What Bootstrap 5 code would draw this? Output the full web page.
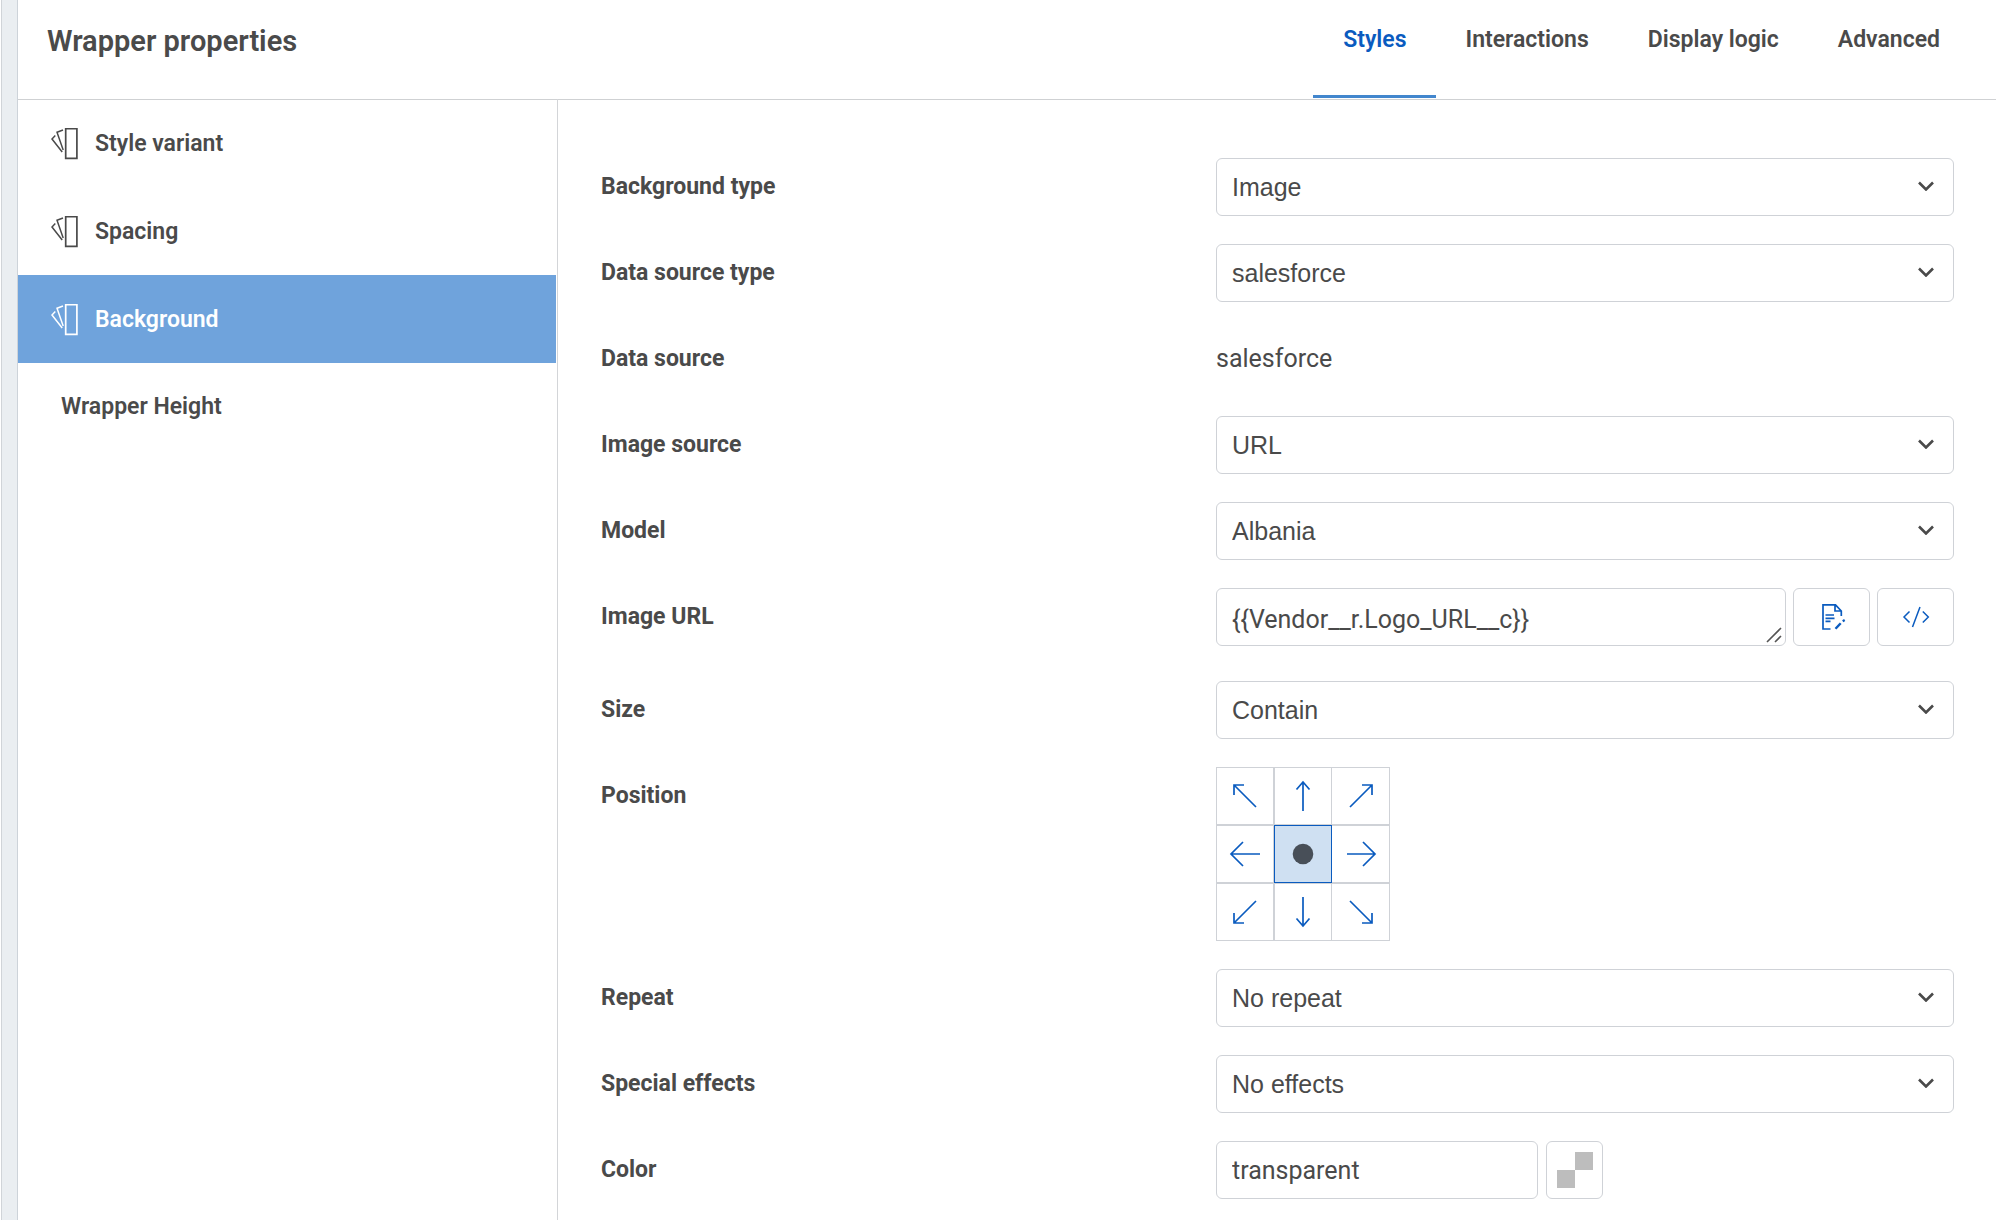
<!DOCTYPE html>
<html lang="en">
<head>
<meta charset="utf-8">
<meta name="viewport" content="width=device-width, initial-scale=1">
<title>Wrapper properties</title>
<link href="https://cdn.jsdelivr.net/npm/bootstrap@5.3.0/dist/css/bootstrap.min.css" rel="stylesheet">
<style>
:root { --ink: #4a4a4a; --blue: #0a5bbf; --line: #cfd2d7; }
body { font-family: Roboto, "Liberation Sans", sans-serif; color: var(--ink); background: #fff; }
.edge-rail { flex: 0 0 17px; margin-left: 1px; background: #eaeef1; border-left: 1px solid #d0d4d8; border-right: 1px solid #cdd3d9; }
.panel-head { height: 100px; padding: 0 27px 0 29px; border-bottom: 1px solid #cfd1d3; }
.panel-title { font-size: 29px; line-height: 32px; font-weight: 600; padding-top: 25px; }
.tab-link { display: block; height: 98px; padding: 26px 29px 0 30px; font-size: 23px; line-height: 28px; font-weight: 600; color: var(--ink); text-decoration: none; }
.tab-link.active { color: var(--blue); border-bottom: 3px solid #4286cd; }
.side-nav { flex: 0 0 540px; margin-top: -1px; padding-right: 1px; border-right: 1px solid #d3d5d8; }
.side-link { height: 88px; padding: 2px 32px 0; gap: 17px; font-size: 23px; line-height: 28px; font-weight: 600; color: var(--ink); text-decoration: none; }
.side-link.active { background: #6fa3dc; color: #fff; }
.side-link.plain { padding: 0 43px; }
.fields { padding: 58px 42px 20px 43px; display: flex; flex-direction: column; gap: 28px; }
.field-row { display: grid; grid-template-columns: 5fr 6fr; }
.field-row.tall { padding-bottom: 7px; }
.field-label { font-size: 23px; line-height: 58px; font-weight: 700; height: 58px; }
.field-row .form-select, .field-row .form-control, .tool-btn { height: 58px; border: 1px solid var(--line); border-radius: 6px; color: var(--ink); background-color: #fff; }
.field-row .form-select, .field-row .form-control { font-size: 25px; line-height: 30px; padding: 13px 15px; }
.field-row .form-select { font-family: "Liberation Sans", Arial, sans-serif; padding-right: 48px; padding-top: 12px; background-position: right 19px top 22px; background-size: 16px 10px; background-image: url("data:image/svg+xml,%3csvg xmlns='http://www.w3.org/2000/svg' viewBox='0 0 16 10'%3e%3cpath d='M1 1.500 8 8.500 15 1.500' fill='none' stroke='%234a4a4a' stroke-width='2.6'/%3e%3c/svg%3e"); }
.field-row textarea.form-control { min-height: 58px; padding-top: 16px; padding-bottom: 8px; resize: none; overflow: hidden; background-repeat: no-repeat; background-position: right 3px bottom 2px; background-image: url("data:image/svg+xml,%3csvg xmlns='http://www.w3.org/2000/svg' width='16' height='16'%3e%3cpath d='M1 15 15 1M9 15 15 9' fill='none' stroke='%23555' stroke-width='1.6'/%3e%3c/svg%3e"); }
.tight { gap: 7px; }
.tool-btn { flex: 0 0 77px; padding: 0; color: var(--blue); display: flex; align-items: center; justify-content: center; }
.tool-btn.swatch { flex-basis: 57px; }
.color-box { flex: 0 0 322px; }
.plain-value { font-size: 25px; line-height: 58px; }
.pos-grid { display: grid; grid-template-columns: repeat(3, 58px); grid-auto-rows: 58px; width: max-content; }
.pos-cell { display: flex; align-items: center; justify-content: center; border: 1px solid var(--line); color: var(--blue); cursor: pointer; }
.pos-cell.last-col { border-left: 0; }
.btn-check:checked + .pos-cell { background: #cfe0f2; border-color: var(--blue); }
svg { flex: none; fill: none; stroke: currentColor; stroke-width: 1.7; }
</style>
<script src="https://cdn.jsdelivr.net/npm/bootstrap@5.3.0/dist/js/bootstrap.bundle.min.js" defer></script>
</head>
<body>
<svg class="d-none" aria-hidden="true">
  <symbol id="fan" viewBox="0 1 28 33">
    <path d="M15.700 1.700h11.200v29.600H15.700z"/>
    <path d="M13 3 7 5.300 13.200 23M5.300 8.500 2 12 12.200 25" stroke-width="1.500"/>
  </symbol>
</svg>
<div class="d-flex min-vh-100">
  <div class="edge-rail"></div>
  <div class="d-flex flex-column flex-grow-1">
    <header class="panel-head d-flex justify-content-between">
      <h1 class="panel-title m-0">Wrapper properties</h1>
      <nav class="d-flex" aria-label="Property tabs">
        <a class="tab-link active" href="#styles" aria-current="page">Styles</a>
        <a class="tab-link" href="#interactions">Interactions</a>
        <a class="tab-link" href="#logic">Display logic</a>
        <a class="tab-link" href="#advanced">Advanced</a>
      </nav>
    </header>
    <div class="d-flex flex-grow-1">
      <nav class="side-nav" aria-label="Style sections">
        <a class="side-link d-flex align-items-center" href="#variant"><svg width="28" height="33"><use href="#fan"/></svg>Style variant</a>
        <a class="side-link d-flex align-items-center" href="#spacing"><svg width="28" height="33"><use href="#fan"/></svg>Spacing</a>
        <a class="side-link d-flex align-items-center active" href="#background"><svg width="28" height="33"><use href="#fan"/></svg>Background</a>
        <a class="side-link plain d-flex align-items-center" href="#height">Wrapper Height</a>
      </nav>
      <main class="flex-grow-1">
        <form class="fields">
          <div class="field-row"><label class="field-label" for="bgType">Background type</label>
            <select class="form-select" id="bgType"><option>Image</option></select></div>
          <div class="field-row"><label class="field-label" for="dsType">Data source type</label>
            <select class="form-select" id="dsType"><option>salesforce</option></select></div>
          <div class="field-row"><label class="field-label" for="ds">Data source</label>
            <output class="plain-value" id="ds">salesforce</output></div>
          <div class="field-row"><label class="field-label" for="imgSource">Image source</label>
            <select class="form-select" id="imgSource"><option>URL</option></select></div>
          <div class="field-row"><label class="field-label" for="model">Model</label>
            <select class="form-select" id="model"><option>Albania</option></select></div>
          <div class="field-row tall"><label class="field-label" for="imgUrl">Image URL</label>
            <div class="d-flex tight">
              <textarea class="form-control" id="imgUrl" rows="1">{{Vendor__r.Logo_URL__c}}</textarea>
              <button class="btn tool-btn" type="button" aria-label="Edit text">
                <svg width="28" height="28" viewBox="0 0 28 28"><path d="M12.500 26H5V1.800H17.500L23.300 8V13M17 2V8H23" stroke-width="1.700"/><path d="M7.500 12H16M7.500 15.300H16.500M7.500 18.300H12.500"/><path d="M17.500 25.800 22.700 20.300" stroke-width="2.400"/><path d="M24.700 18.200 26.700 17" stroke-width="2.200"/></svg>
              </button>
              <button class="btn tool-btn" type="button" aria-label="Edit code">
                <svg width="28" height="28" viewBox="0 0 28 28"><path d="M7.500 8.500 2 14 7.500 19.500M18 4 10.500 24M20.800 8.500 26.300 14 20.800 19.500" stroke-width="1.500"/></svg>
              </button>
            </div></div>
          <div class="field-row"><label class="field-label" for="size">Size</label>
            <select class="form-select" id="size"><option>Contain</option></select></div>
          <div class="field-row"><span class="field-label" id="posLabel">Position</span>
            <div class="pos-grid" role="radiogroup" aria-labelledby="posLabel">
              <input class="btn-check" type="radio" name="pos" id="p1"><label class="pos-cell" for="p1" aria-label="Top left"><svg width="32" height="32"><path d="M27 27 5 5M15 5H5V15"/></svg></label>
              <input class="btn-check" type="radio" name="pos" id="p2"><label class="pos-cell" for="p2" aria-label="Top"><svg width="32" height="32"><path d="M16 31V2M9.500 9.500 16 2 22.500 9.500"/></svg></label>
              <input class="btn-check" type="radio" name="pos" id="p3"><label class="pos-cell last-col" for="p3" aria-label="Top right"><svg width="32" height="32"><path d="M5 27 27 5M17 5H27V15"/></svg></label>
              <input class="btn-check" type="radio" name="pos" id="p4"><label class="pos-cell" for="p4" aria-label="Left"><svg width="32" height="32"><path d="M31 16H2M14 4 2 16 14 28"/></svg></label>
              <input class="btn-check" type="radio" name="pos" id="p5" checked><label class="pos-cell" for="p5" aria-label="Center"><svg width="32" height="32"><circle cx="16" cy="16" r="10.300" fill="#484f58" stroke="none"/></svg></label>
              <input class="btn-check" type="radio" name="pos" id="p6"><label class="pos-cell last-col" for="p6" aria-label="Right"><svg width="32" height="32"><path d="M2 16H30M18 4 30 16 18 28"/></svg></label>
              <input class="btn-check" type="radio" name="pos" id="p7"><label class="pos-cell" for="p7" aria-label="Bottom left"><svg width="32" height="32"><path d="M27 5 5 27M15 27H5V17"/></svg></label>
              <input class="btn-check" type="radio" name="pos" id="p8"><label class="pos-cell" for="p8" aria-label="Bottom"><svg width="32" height="32"><path d="M16 1V30M9.500 22.500 16 30 22.500 22.500"/></svg></label>
              <input class="btn-check" type="radio" name="pos" id="p9"><label class="pos-cell last-col" for="p9" aria-label="Bottom right"><svg width="32" height="32"><path d="M5 5 27 27M17 27H27V17"/></svg></label>
            </div></div>
          <div class="field-row"><label class="field-label" for="repeat">Repeat</label>
            <select class="form-select" id="repeat"><option>No repeat</option></select></div>
          <div class="field-row"><label class="field-label" for="effects">Special effects</label>
            <select class="form-select" id="effects"><option>No effects</option></select></div>
          <div class="field-row"><label class="field-label" for="color">Color</label>
            <div class="d-flex gap-2">
              <div class="color-box"><input class="form-control" type="text" id="color" value="transparent"></div>
              <button class="btn tool-btn swatch" type="button" aria-label="Pick color">
                <svg width="36" height="36"><path d="M18 0H36V18H18zM0 18H18V36H0z" fill="#bdbdbd" stroke="none"/></svg>
              </button>
            </div></div>
        </form>
      </main>
    </div>
  </div>
</div>
</body>
</html>
